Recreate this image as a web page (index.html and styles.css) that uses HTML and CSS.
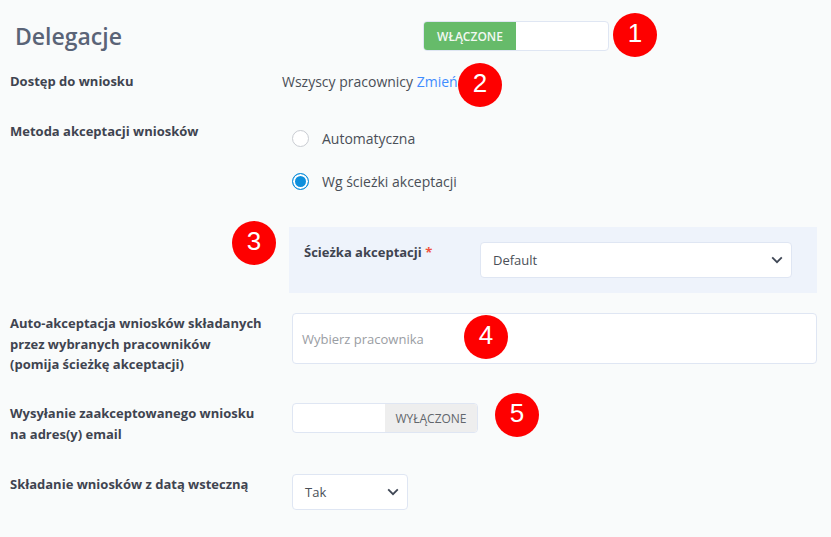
FILE: index.html
```html
<!DOCTYPE html>
<html lang="pl">
<head>
<meta charset="utf-8">
<title>Delegacje</title>
<link rel="stylesheet" href="styles.css">
</head>
<body>
<main class="page">
  <header class="head">
    <h1 class="title">Delegacje</h1>
    <div class="toggle toggle-on"><span class="toggle-label on">WŁĄCZONE</span><span class="toggle-blank"></span></div>
  </header>
  <div class="row row-access">
    <div class="label">Dostęp do wniosku</div>
    <div class="value">Wszyscy pracownicy <a class="link" href="#">Zmień</a></div>
  </div>
  <div class="row row-method">
    <div class="label">Metoda akceptacji wniosków</div>
    <div class="radios">
      <div class="radio-line"><span class="radio"></span>Automatyczna</div>
      <div class="radio-line"><span class="radio checked"></span>Wg ścieżki akceptacji</div>
    </div>
  </div>
  <section class="path">
    <div class="path-label">Ścieżka akceptacji <span class="req">*</span></div>
    <div class="select select-wide">Default<svg class="chev" viewBox="0 0 12 8"><path d="M1.2 1.4 6 6.2l4.8-4.8"/></svg></div>
  </section>
  <div class="row row-auto">
    <div class="label">Auto-akceptacja wniosków składanych<br>przez wybranych pracowników<br>(pomija ścieżkę akceptacji)</div>
    <div class="input">Wybierz pracownika</div>
  </div>
  <div class="row row-send">
    <div class="label">Wysyłanie zaakceptowanego wniosku<br>na adres(y) email</div>
    <div class="toggle toggle-off"><span class="toggle-blank"></span><span class="toggle-label off">WYŁĄCZONE</span></div>
  </div>
  <div class="row row-back">
    <div class="label">Składanie wniosków z datą wsteczną</div>
    <div class="select select-small">Tak<svg class="chev" viewBox="0 0 12 8"><path d="M1.2 1.4 6 6.2l4.8-4.8"/></svg></div>
  </div>
  <span class="badge b1">1</span>
  <span class="badge b2">2</span>
  <span class="badge b3">3</span>
  <span class="badge b4">4</span>
  <span class="badge b5">5</span>
</main>
</body>
</html>
```
FILE: styles.css
```css
* { box-sizing: border-box; }
html, body { margin: 0; height: 100%; }
body {
  background: #f9fbfb;
  font-family: "Open Sans", sans-serif;
  color: #4a4f57;
  overflow: hidden;
}
.page { position: relative; width: 831px; height: 537px; padding: 21px 14px 0 10px; }
.head { display: flex; align-items: center; height: 30px; }
.title { margin: 0 0 0 5px; width: 408px; font-size: 23px; line-height: 30px; font-weight: 600; color: #5a6477; }
.toggle { display: flex; height: 30px; background: #fff; border: 1px solid #dfe6f3; border-radius: 4px; overflow: hidden; }
.toggle-on { width: 186px; }
.toggle-off { width: 186px; }
.toggle-blank { flex: 1; }
.toggle-label { display: flex; align-items: center; justify-content: center; font-size: 12px; }
.toggle-label.on { width: 92px; background: #66bb6a; color: #f2f8f2; font-weight: 600; }
.toggle-label.off { width: 92px; background: #eeeeee; color: #62666c; }
.row { display: grid; grid-template-columns: 272px 1fr; }
.label { font-size: 13px; line-height: 20.5px; font-weight: 700; color: #3f4450; }
.row-access { margin-top: 20px; }
.value { font-size: 14px; line-height: 22px; }
.link { color: #3f8cff; text-decoration: none; }
.row-method { margin-top: 28px; }
.radios { padding-left: 10px; padding-top: 6px; }
.radio-line { display: flex; align-items: center; height: 22px; font-size: 14px; margin-bottom: 21px; }
.radio { width: 17px; height: 17px; margin-right: 13px; border-radius: 50%; border: 1px solid #c9ccd2; background: #fff; }
.radio.checked { border: 1.5px solid #0f8fdc; background: #0f8fdc; box-shadow: inset 0 0 0 2px #fff; }
.path { display: flex; margin: 14px 0 0 279px; width: 528px; height: 66px; padding: 15px 25px 0 14px; background: #eef3fb; }
.path-label { width: 177px; padding-left: 1px; font-size: 13px; line-height: 21px; font-weight: 700; color: #3f4450; }
.req { color: #f0523d; }
.select { display: flex; align-items: center; justify-content: space-between; background: #fff; border: 1px solid #dfe6f3; border-radius: 4px; font-size: 13px; height: 36px; }
.select-wide { width: 312px; padding: 0 8px 0 12px; }
.select-small { width: 116px; padding: 0 8px 0 12px; margin-left: 10px; }
.chev { width: 12px; height: 8px; fill: none; stroke: #3f4755; stroke-width: 1.8; }
.row-auto { margin-top: 20px; }
.input { display: flex; align-items: center; margin-left: 10px; height: 51px; padding-left: 9px; background: #fff; border: 1px solid #dfe6f3; border-radius: 4px; font-size: 13px; color: #9a9da3; }
.row-send { margin-top: 28.5px; }
.row-send .toggle { margin-left: 10px; }
.row-back { margin-top: 29.5px; }
.badge { position: absolute; width: 44px; height: 44px; border-radius: 50%; background: #fe0000; color: #fff; font-family: "Liberation Sans", sans-serif; font-size: 26px; line-height: 41px; text-align: center; }
.b1 { left: 613px; top: 13px; }
.b2 { left: 458px; top: 63px; }
.b3 { left: 232px; top: 221px; }
.b4 { left: 464px; top: 315px; }
.b5 { left: 495px; top: 393px; }
```
